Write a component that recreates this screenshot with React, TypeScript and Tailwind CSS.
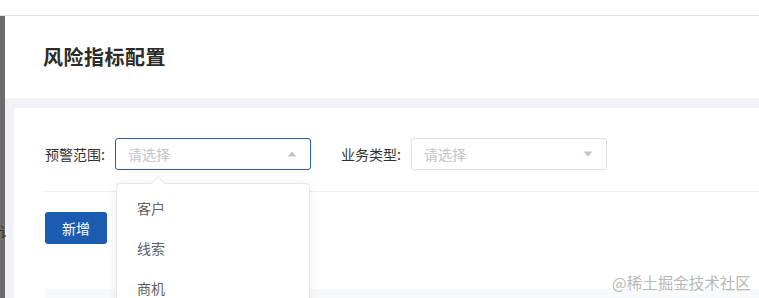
import { useState } from "react";

const FONT = { fontFamily: '"Noto Sans CJK SC", "Noto Sans", sans-serif' };

function Caret({ up }: { up?: boolean }) {
  return (
    <svg width="10" height="6" viewBox="0 0 10 6" className={up ? "" : "rotate-180"}>
      <path d="M5 0.5 L9.5 5.5 L0.5 5.5 Z" fill="#c0c4cc" />
    </svg>
  );
}

function Select({ focused }: { focused?: boolean }) {
  return (
    <div
      className={`flex h-8 w-[196px] items-center justify-between rounded-[3px] border bg-white pl-[12px] pr-[13px] ${
        focused ? "border-[#2a5ea8]" : "border-[#dcdfe6]"
      }`}
    >
      <span className="text-[14px] text-[#c0c4cc]">请选择</span>
      <Caret up={focused} />
    </div>
  );
}

export default function App() {
  const [options] = useState(["客户", "线索", "商机"]);

  return (
    <div className="relative h-[298px] w-[759px] overflow-hidden bg-white text-[#333]" style={FONT}>
      {/* Top bar */}
      <div className="h-[16px] border-b border-[#e2e2e2] bg-white" />

      <div className="flex h-[282px]">
        <div className="w-[5px] bg-[#6c6c6c]" />

        <div className="flex flex-1 flex-col">
          {/* Header */}
          <div className="flex h-[82px] shrink-0 items-center pl-[38px]">
            <h1 className="text-[20px] font-bold tracking-[0.5px] text-[#2b2b2b]">风险指标配置</h1>
          </div>

          {/* Body */}
          <div className="flex flex-1 flex-col bg-[#f0f2f5] pl-[9px] pt-[10px]">
            <div className="flex flex-1 flex-col bg-white pl-[31px] pt-[30px]">
              <div className="flex items-center">
                <span className="w-[70px] text-[14px] text-[#333]">预警范围:</span>
                <Select focused />
                <span className="ml-[30px] w-[70px] text-[14px] text-[#333]">业务类型:</span>
                <Select />
              </div>

              <div className="mt-[21px] h-px bg-[#ebeef5]" />

              <div className="mt-[20px]">
                <button className="h-[32px] w-[62px] rounded-[3px] bg-[#1b5cb0] text-[14px] text-white">
                  新增
                </button>
              </div>

              <div className="mt-auto h-[9px] bg-[#f8f9fb]" />
            </div>
          </div>
        </div>
      </div>

      {/* Clipped text at left edge */}
      <span className="absolute left-[-1px] top-[221px] text-[14px] text-[#333]">讠</span>

      {/* Dropdown */}
      <div className="absolute left-[116px] top-[183px] w-[194px] rounded-[4px] border border-[#e4e7ed] bg-white py-[4px] shadow-[0_2px_12px_rgba(0,0,0,0.08)]">
        <div className="absolute left-[36px] top-[-6px] h-[10px] w-[10px] rotate-45 border-l border-t border-[#e4e7ed] bg-white" />
        {options.map((o) => (
          <div key={o} className="flex h-[40px] items-center pl-[20px] text-[14px] text-[#606266]">
            {o}
          </div>
        ))}
      </div>

      {/* Watermark */}
      <span className="absolute left-[612px] top-[271px] whitespace-nowrap text-[15.5px] text-[#b8b8b8]">
        @稀土掘金技术社区
      </span>
    </div>
  );
}
